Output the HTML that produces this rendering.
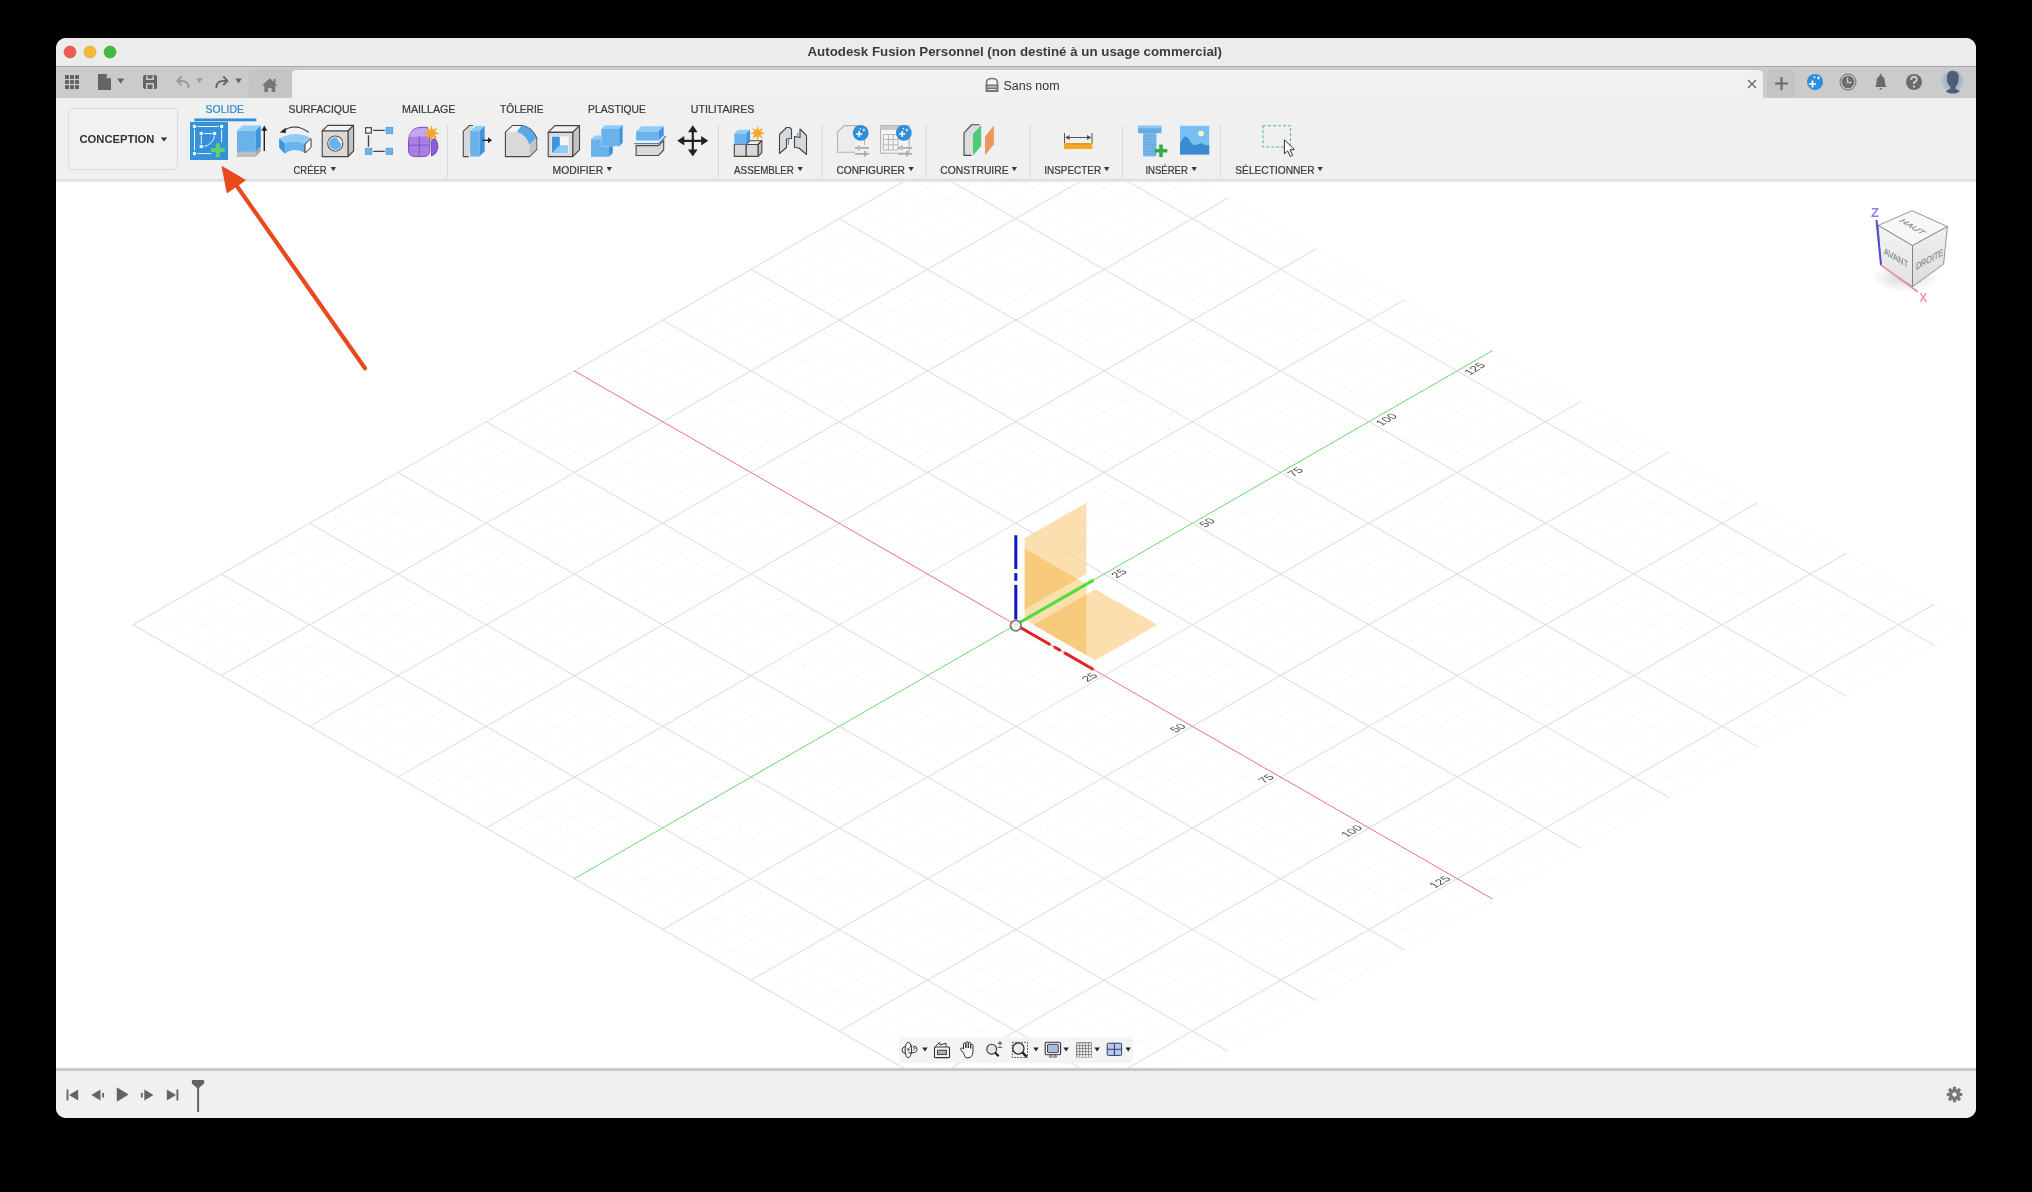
<!DOCTYPE html>
<html><head><meta charset="utf-8"><title>Autodesk Fusion</title>
<style>html,body{margin:0;padding:0;background:#000;width:2032px;height:1192px;overflow:hidden}
svg text{font-family:"Liberation Sans",sans-serif}</style></head>
<body><svg width="2032" height="1192" viewBox="0 0 2032 1192" style="display:block;will-change:transform;font-family:'Liberation Sans',sans-serif"><rect x="0" y="0" width="2032" height="1192" fill="#000"/>
<defs><clipPath id="win"><rect x="56" y="38" width="1920" height="1080" rx="10" ry="10"/></clipPath></defs>
<g clip-path="url(#win)">
<rect x="56" y="38" width="1920" height="1080" fill="#f0f0f0"/>
<rect x="56" y="38" width="1920" height="28" fill="#ececec"/>
<rect x="56" y="66" width="1920" height="1" fill="#a9a9a9"/>
<rect x="56" y="67" width="1920" height="31" fill="#cbcbcb"/>
<rect x="248.5" y="70" width="43" height="28" rx="4" fill="#c4c4c4"/>
<rect x="1767" y="70" width="28" height="28" rx="4" fill="#c4c4c4"/>
<path d="M292 98 V75 Q292 70 297 70 H1758 Q1763 70 1763 75 V98 Z" fill="#f1f1f1"/>
<rect x="56" y="98" width="1920" height="82" fill="#f0f0f0"/>
<rect x="56" y="179" width="1920" height="1" fill="#dadada"/>
<rect x="56" y="180" width="1920" height="2" fill="#e6e6e6"/>
<rect x="56" y="182" width="1920" height="886" fill="#ffffff"/>
<rect x="56" y="1068" width="1920" height="3" fill="#c9c9c9"/>
<rect x="56" y="1071" width="1920" height="47" fill="#f0f0f0"/>
</g>
<defs><clipPath id="vp"><rect x="56" y="182" width="1920" height="886"/></clipPath></defs>
<g clip-path="url(#vp)">
<path d="M150.70 634.95L1068.76 106.89M150.70 614.64L1068.76 1142.70M168.36 645.11L1086.42 117.05M168.36 604.49L1086.42 1132.55M186.01 655.26L1104.08 127.20M186.01 594.33L1104.08 1122.39M203.67 665.42L1121.73 137.36M203.67 584.18L1121.73 1112.24M238.98 685.73L1157.04 157.67M238.98 563.87L1157.04 1091.93M256.63 695.88L1174.69 167.82M256.63 553.71L1174.69 1081.78M274.29 706.04L1192.35 177.98M274.29 543.56L1192.35 1071.62M291.94 716.19L1210.00 188.13M291.94 533.40L1210.00 1061.46M327.25 736.50L1245.32 208.44M327.25 513.09L1245.32 1041.15M344.91 746.66L1262.97 218.60M344.91 502.94L1262.97 1031.00M362.56 756.81L1280.62 228.75M362.56 492.78L1280.62 1020.85M380.22 766.97L1298.28 238.91M380.22 482.63L1298.28 1010.69M415.53 787.28L1333.59 259.22M415.53 462.32L1333.59 990.38M433.18 797.43L1351.24 269.37M433.18 452.16L1351.24 980.22M450.84 807.59L1368.90 279.53M450.84 442.01L1368.90 970.07M468.49 817.75L1386.55 289.68M468.49 431.85L1386.55 959.91M503.80 838.05L1421.87 309.99M503.80 411.54L1421.87 939.61M521.46 848.21L1439.52 320.15M521.46 401.39L1439.52 929.45M539.12 858.37L1457.17 330.30M539.12 391.23L1457.17 919.29M556.77 868.52L1474.83 340.46M556.77 381.08L1474.83 909.14M592.08 888.83L1510.14 360.77M592.08 360.77L1510.14 888.83M609.73 898.98L1527.80 370.92M609.73 350.61L1527.80 878.67M627.39 909.14L1545.45 381.08M627.39 340.46L1545.45 868.52M645.04 919.29L1563.11 391.23M645.04 330.30L1563.11 858.37M680.36 939.61L1598.41 411.54M680.36 309.99L1598.41 838.05M698.01 949.76L1616.07 421.70M698.01 299.84L1616.07 827.90M715.66 959.91L1633.72 431.85M715.66 289.68L1633.72 817.75M733.32 970.07L1651.38 442.01M733.32 279.53L1651.38 807.59M768.63 990.38L1686.69 462.32M768.63 259.22L1686.69 787.28M786.28 1000.53L1704.35 472.47M786.28 249.06L1704.35 777.12M803.94 1010.69L1722.00 482.63M803.94 238.91L1722.00 766.97M821.59 1020.85L1739.65 492.78M821.59 228.75L1739.65 756.81M856.90 1041.15L1774.97 513.09M856.90 208.44L1774.97 736.50M874.56 1051.31L1792.62 523.25M874.56 198.29L1792.62 726.35M892.21 1061.46L1810.28 533.40M892.21 188.13L1810.28 716.19M909.87 1071.62L1827.93 543.56M909.87 177.98L1827.93 706.04M945.18 1091.93L1863.24 563.87M945.18 157.67L1863.24 685.73M962.83 1102.09L1880.89 574.02M962.83 147.51L1880.89 675.57M980.49 1112.24L1898.55 584.18M980.49 137.36L1898.55 665.42M998.14 1122.39L1916.20 594.33M998.14 127.20L1916.20 655.26M1033.45 1142.70L1951.51 614.64M1033.45 106.89L1951.51 634.95M1051.11 1152.86L1969.17 624.80M1051.11 96.74L1969.17 624.80" stroke="#f2f2f2" stroke-width="1" stroke-dasharray="1.6,2.4" fill="none"/>
<path d="M133.05 624.80L1051.11 96.74M133.05 624.80L1051.11 1152.86M221.32 675.57L1139.38 147.51M221.32 574.02L1139.38 1102.09M309.60 726.35L1227.66 198.29M309.60 523.25L1227.66 1051.31M397.87 777.12L1315.93 249.06M397.87 472.47L1315.93 1000.53M486.15 827.90L1404.21 299.84M486.15 421.70L1404.21 949.76M662.70 929.45L1580.76 401.39M662.70 320.15L1580.76 848.21M750.97 980.22L1669.03 452.16M750.97 269.37L1669.03 797.43M839.25 1031.00L1757.31 502.94M839.25 218.60L1757.31 746.66M927.52 1081.78L1845.59 553.71M927.52 167.82L1845.59 695.88M1015.80 1132.55L1933.86 604.49M1015.80 117.05L1933.86 645.11" stroke="#dfdfdf" stroke-width="1.05" fill="none"/>
<line x1="574.42" y1="370.92" x2="1492.48" y2="898.98" stroke="#ea7480" stroke-width="1"/>
<line x1="574.42" y1="878.67" x2="1492.48" y2="350.61" stroke="#6fd86f" stroke-width="1"/>
<text transform="matrix(0.866,-0.5,0.866,0.5,1098.43,675.98)" font-size="11.4" fill="#4a4a4a" text-anchor="end">25</text>
<text transform="matrix(0.866,-0.5,0.866,0.5,1116.79,578.49)" font-size="11.4" fill="#4a4a4a" text-anchor="start">25</text>
<text transform="matrix(0.866,-0.5,0.866,0.5,1186.70,726.76)" font-size="11.4" fill="#4a4a4a" text-anchor="end">50</text>
<text transform="matrix(0.866,-0.5,0.866,0.5,1205.06,527.72)" font-size="11.4" fill="#4a4a4a" text-anchor="start">50</text>
<text transform="matrix(0.866,-0.5,0.866,0.5,1274.98,777.53)" font-size="11.4" fill="#4a4a4a" text-anchor="end">75</text>
<text transform="matrix(0.866,-0.5,0.866,0.5,1293.34,476.94)" font-size="11.4" fill="#4a4a4a" text-anchor="start">75</text>
<text transform="matrix(0.866,-0.5,0.866,0.5,1363.25,828.31)" font-size="11.4" fill="#4a4a4a" text-anchor="end">100</text>
<text transform="matrix(0.866,-0.5,0.866,0.5,1381.61,426.17)" font-size="11.4" fill="#4a4a4a" text-anchor="start">100</text>
<text transform="matrix(0.866,-0.5,0.866,0.5,1451.53,879.08)" font-size="11.4" fill="#4a4a4a" text-anchor="end">125</text>
<text transform="matrix(0.866,-0.5,0.866,0.5,1469.89,375.39)" font-size="11.4" fill="#4a4a4a" text-anchor="start">125</text>
<polygon points="1033.45,624.80 1095.25,660.34 1157.04,624.80 1095.25,589.26" fill="#fff" fill-opacity="0.55"/>
<polygon points="1024.63,619.70 1086.42,655.25 1086.42,584.02 1024.63,548.48" fill="#fff" fill-opacity="0.55"/>
<polygon points="1024.63,609.55 1086.42,574.00 1086.42,502.78 1024.63,538.32" fill="#fff" fill-opacity="0.55"/>
<polygon points="1033.45,624.80 1095.25,660.34 1157.04,624.80 1095.25,589.26" fill="rgba(245,168,38,0.37)"/>
<polygon points="1024.63,619.70 1086.42,655.25 1086.42,584.02 1024.63,548.48" fill="rgba(245,168,38,0.37)"/>
<polygon points="1024.63,609.55 1086.42,574.00 1086.42,502.78 1024.63,538.32" fill="rgba(245,168,38,0.37)"/>
<line x1="1020.39" y1="627.44" x2="1050.40" y2="644.70" stroke="#e3231f" stroke-width="3"/>
<line x1="1053.93" y1="646.73" x2="1060.64" y2="650.59" stroke="#e3231f" stroke-width="3"/>
<line x1="1064.17" y1="652.62" x2="1093.48" y2="669.48" stroke="#e3231f" stroke-width="3"/>
<line x1="1015.80" y1="619.51" x2="1015.80" y2="584.91" stroke="#0b17c9" stroke-width="3"/>
<line x1="1015.80" y1="580.84" x2="1015.80" y2="573.11" stroke="#0b17c9" stroke-width="3"/>
<line x1="1015.80" y1="569.04" x2="1015.80" y2="535.26" stroke="#0b17c9" stroke-width="3"/>
<line x1="1020.39" y1="622.16" x2="1093.48" y2="580.12" stroke="#4fdf3a" stroke-width="3"/>
<circle cx="1015.8" cy="625.5999999999999" r="5.3" fill="rgba(255,255,255,0.6)" stroke="#7b7b7b" stroke-width="1.8"/>
</g>
<defs><radialGradient id="cshadow" cx="0.5" cy="0.5" r="0.5"><stop offset="0" stop-color="#000" stop-opacity="0.16"/><stop offset="1" stop-color="#000" stop-opacity="0"/></radialGradient><linearGradient id="cfL" x1="0" y1="0" x2="0" y2="1"><stop offset="0" stop-color="#f4f4f4"/><stop offset="1" stop-color="#e2e2e2"/></linearGradient><linearGradient id="cfR" x1="0" y1="0" x2="0" y2="1"><stop offset="0" stop-color="#f0f0f0"/><stop offset="1" stop-color="#dcdcdc"/></linearGradient></defs>
<ellipse cx="1905" cy="278" rx="34" ry="14" fill="url(#cshadow)"/>
<polygon points="1878.2,225.4 1912.0,210.7 1947.4,226.5 1912.5,245.6" fill="#f7f7f7" stroke="#6a6a6a" stroke-width="0.7" stroke-linejoin="round"/>
<polygon points="1878.2,225.4 1912.5,245.6 1912.5,286.5 1880.9,265.2" fill="url(#cfL)" stroke="#6a6a6a" stroke-width="0.7" stroke-linejoin="round"/>
<polygon points="1912.5,245.6 1947.4,226.5 1943.6,264.2 1912.5,286.5" fill="url(#cfR)" stroke="#6a6a6a" stroke-width="0.7" stroke-linejoin="round"/>
<text transform="matrix(0.86,0.5,-0.8,0.35,1910,227.8)" font-size="9.4" fill="#8a8a8a" stroke="#8a8a8a" stroke-width="0.25" text-anchor="middle" textLength="27" lengthAdjust="spacingAndGlyphs">HAUT</text>
<text transform="matrix(0.866,0.5,0,1,1896,261)" font-size="9.4" fill="#8a8a8a" stroke="#8a8a8a" stroke-width="0.25" text-anchor="middle" textLength="28" lengthAdjust="spacingAndGlyphs">AVANT</text>
<text transform="matrix(0.877,-0.48,0,1,1929.5,262.5)" font-size="9.4" fill="#8a8a8a" stroke="#8a8a8a" stroke-width="0.25" text-anchor="middle" textLength="31" lengthAdjust="spacingAndGlyphs">DROITE</text>
<line x1="1876.5" y1="220" x2="1881" y2="265" stroke="#4b4bd6" stroke-width="2"/>
<line x1="1881" y1="265" x2="1918" y2="292" stroke="#e79aa8" stroke-width="2"/>
<text x="1871" y="216.5" font-size="13" fill="#8585e6" font-weight="700" textLength="8" lengthAdjust="spacingAndGlyphs">Z</text>
<text x="1919.3" y="301.5" font-size="13" fill="#ee9aaa" font-weight="700" textLength="8" lengthAdjust="spacingAndGlyphs">X</text>
<circle cx="70" cy="52" r="6" fill="#ee5a52" stroke="#d94a43" stroke-width="0.6"/>
<circle cx="90" cy="52" r="6" fill="#f4b938" stroke="#dca32c" stroke-width="0.6"/>
<circle cx="110" cy="52" r="6" fill="#3ebc3e" stroke="#32a332" stroke-width="0.6"/>
<text x="807.5" y="55.8" font-size="13" font-weight="700" fill="#3c3c3c" text-anchor="start" textLength="414.5" lengthAdjust="spacingAndGlyphs" >Autodesk Fusion Personnel (non destiné à un usage commercial)</text>
<rect x="65" y="75" width="4" height="4" rx="0.6" fill="#646464"/><rect x="65" y="80" width="4" height="4" rx="0.6" fill="#646464"/><rect x="65" y="85" width="4" height="4" rx="0.6" fill="#646464"/><rect x="70" y="75" width="4" height="4" rx="0.6" fill="#646464"/><rect x="70" y="80" width="4" height="4" rx="0.6" fill="#646464"/><rect x="70" y="85" width="4" height="4" rx="0.6" fill="#646464"/><rect x="75" y="75" width="4" height="4" rx="0.6" fill="#646464"/><rect x="75" y="80" width="4" height="4" rx="0.6" fill="#646464"/><rect x="75" y="85" width="4" height="4" rx="0.6" fill="#646464"/>
<path d="M98 74 H107 L111 78 V90 H98 Z" fill="#646464"/><path d="M107 74 V78 H111" fill="#cbcbcb" stroke="#cbcbcb" stroke-width="0.5"/>
<path d="M117.20 78.60 H124.20 L120.70 83.80 Z" fill="#646464"/>
<path d="M143 76.5 Q143 75 144.5 75 H155.5 Q157 75 157 76.5 V87.5 Q157 89 155.5 89 H144.5 L143 87.5 Z" fill="#646464"/><rect x="146" y="75.5" width="8" height="4.5" fill="#cbcbcb"/><rect x="147.5" y="75.5" width="5" height="3" fill="#646464"/><rect x="146" y="83" width="8" height="6" fill="#cbcbcb"/><rect x="147.5" y="84.5" width="5" height="4.5" fill="#646464"/>
<path d="M188.5 88 Q188.5 80.8 181 80.8 H177.5 M181.5 76.5 L177.3 80.8 L181.5 85" fill="none" stroke="#959595" stroke-width="1.8" stroke-linejoin="round"/>
<path d="M196.05 78.20 H202.55 L199.30 83.00 Z" fill="#9a9a9a"/>
<path d="M216.3 88 Q216.3 80.8 223.8 80.8 H227.3 M223.3 76.5 L227.5 80.8 L223.3 85" fill="none" stroke="#646464" stroke-width="1.8" stroke-linejoin="round"/>
<path d="M235.25 78.60 H241.75 L238.50 83.40 Z" fill="#646464"/>
<path d="M262 85.5 L269.8 78.2 L277.6 85.5 H275.3 V92 H271.6 V88 H268 V92 H264.3 V85.5 Z" fill="#777"/><rect x="273.5" y="79" width="2" height="4" fill="#777"/>
<path d="M986.5 85 V82.5 Q986.5 78.5 992 78.5 Q997.5 78.5 997.5 82.5 V85" fill="none" stroke="#777" stroke-width="1.6"/><rect x="985.5" y="84.5" width="13" height="7.5" rx="0.8" fill="#777"/><rect x="987.5" y="86.5" width="9" height="0.9" fill="#f1f1f1"/><rect x="987.5" y="89" width="9" height="0.9" fill="#f1f1f1"/>
<text x="1003.5" y="89.7" font-size="12.3" font-weight="400" fill="#333" text-anchor="start" textLength="56" lengthAdjust="spacingAndGlyphs" >Sans nom</text>
<path d="M1748 80 L1756 88 M1756 80 L1748 88" stroke="#666" stroke-width="1.3"/>
<path d="M1775 83.5 H1788 M1781.5 77 V90" stroke="#6b6b6b" stroke-width="2.2"/>
<circle cx="1815" cy="82" r="8" fill="#2d8fdc"/><path d="M1812.5 80.5 V87.5 M1809 84 H1816" stroke="#fff" stroke-width="1.7"/><path d="M1818.5 76.5 V79.5 M1817 78 H1820" stroke="#fff" stroke-width="1"/><circle cx="1814.5" cy="77.2" r="0.9" fill="#fff"/>
<circle cx="1848" cy="82" r="8" fill="none" stroke="#6b6b6b" stroke-width="1"/><circle cx="1848" cy="82" r="6.3" fill="#6b6b6b"/><path d="M1847.5 77.5 V82.5 H1851.5" fill="none" stroke="#cbcbcb" stroke-width="1.3"/>
<path d="M1875 87 Q1876.5 85.5 1876.5 82 Q1876.5 76.5 1880.7 75.6 Q1884.9 76.5 1884.9 82 Q1884.9 85.5 1886.4 87 Z" fill="#6b6b6b"/><circle cx="1880.7" cy="74.8" r="1.1" fill="#6b6b6b"/><path d="M1879 88 H1882.4 L1880.7 90 Z" fill="#6b6b6b"/>
<circle cx="1914" cy="82" r="8" fill="#6b6b6b"/><path d="M1911.2 80 Q1911.2 76.7 1914 76.7 Q1916.9 76.7 1916.9 79.6 Q1916.9 81.3 1914 82.5 V84" fill="none" stroke="#cbcbcb" stroke-width="1.9"/><circle cx="1914" cy="86.6" r="1.2" fill="#cbcbcb"/>
<defs><clipPath id="av"><circle cx="1952.7" cy="81.8" r="11.8"/></clipPath><radialGradient id="avg" cx="0.5" cy="0.45" r="0.55"><stop offset="0.6" stop-color="#a6b5c9"/><stop offset="1" stop-color="#c4ceda"/></radialGradient></defs><circle cx="1952.7" cy="81.8" r="11.8" fill="url(#avg)"/><g clip-path="url(#av)"><path d="M1944 95 Q1944.5 90.5 1950.3 89 V86.5 Q1946.8 84 1946.8 78 Q1946.8 71 1952.5 70.8 Q1958.8 71 1958.8 77.5 Q1958.8 84 1955.6 86.5 V89 Q1961 90.5 1962 95 Z" fill="#4f5e75"/></g>
<rect x="68.5" y="108.5" width="109" height="61" rx="4" fill="#f1f1f1" stroke="#dcdcdc" stroke-width="1"/>
<text x="79.5" y="143.3" font-size="11.4" font-weight="700" fill="#333" text-anchor="start" textLength="75" lengthAdjust="spacingAndGlyphs" >CONCEPTION</text>
<path d="M160.75 137.60 H167.25 L164.00 141.60 Z" fill="#333"/>
<text x="205.6" y="112.8" font-size="10.7" font-weight="400" fill="#2b8ad0" text-anchor="start" textLength="38.3" lengthAdjust="spacingAndGlyphs" stroke="#2b8ad0" stroke-width="0.22" >SOLIDE</text>
<text x="288.6" y="112.8" font-size="10.7" font-weight="400" fill="#3a3a3a" text-anchor="start" textLength="67.8" lengthAdjust="spacingAndGlyphs" stroke="#3a3a3a" stroke-width="0.22" >SURFACIQUE</text>
<text x="402.0" y="112.8" font-size="10.7" font-weight="400" fill="#3a3a3a" text-anchor="start" textLength="53.5" lengthAdjust="spacingAndGlyphs" stroke="#3a3a3a" stroke-width="0.22" >MAILLAGE</text>
<text x="500.0" y="112.8" font-size="10.7" font-weight="400" fill="#3a3a3a" text-anchor="start" textLength="43.599999999999994" lengthAdjust="spacingAndGlyphs" stroke="#3a3a3a" stroke-width="0.22" >TÔLERIE</text>
<text x="588.1" y="112.8" font-size="10.7" font-weight="400" fill="#3a3a3a" text-anchor="start" textLength="57.699999999999996" lengthAdjust="spacingAndGlyphs" stroke="#3a3a3a" stroke-width="0.22" >PLASTIQUE</text>
<text x="690.8000000000001" y="112.8" font-size="10.7" font-weight="400" fill="#3a3a3a" text-anchor="start" textLength="63.599999999999994" lengthAdjust="spacingAndGlyphs" stroke="#3a3a3a" stroke-width="0.22" >UTILITAIRES</text>
<rect x="194.3" y="118.5" width="62" height="2.8" fill="#2f8fd6"/>
<text x="293.5" y="173.5" font-size="10.7" font-weight="400" fill="#3a3a3a" text-anchor="start" textLength="33.199999999999996" lengthAdjust="spacingAndGlyphs" stroke="#3a3a3a" stroke-width="0.22" >CRÉER</text>
<path d="M330.60 167.10 H336.00 L333.30 171.30 Z" fill="#3a3a3a"/>
<text x="552.6" y="173.5" font-size="10.7" font-weight="400" fill="#3a3a3a" text-anchor="start" textLength="50.5" lengthAdjust="spacingAndGlyphs" stroke="#3a3a3a" stroke-width="0.22" >MODIFIER</text>
<path d="M606.60 167.10 H612.00 L609.30 171.30 Z" fill="#3a3a3a"/>
<text x="734.1" y="173.5" font-size="10.7" font-weight="400" fill="#3a3a3a" text-anchor="start" textLength="59.8" lengthAdjust="spacingAndGlyphs" stroke="#3a3a3a" stroke-width="0.22" >ASSEMBLER</text>
<path d="M797.50 167.10 H802.90 L800.20 171.30 Z" fill="#3a3a3a"/>
<text x="836.4" y="173.5" font-size="10.7" font-weight="400" fill="#3a3a3a" text-anchor="start" textLength="68.39999999999999" lengthAdjust="spacingAndGlyphs" stroke="#3a3a3a" stroke-width="0.22" >CONFIGURER</text>
<path d="M908.40 167.10 H913.80 L911.10 171.30 Z" fill="#3a3a3a"/>
<text x="940.3000000000001" y="173.5" font-size="10.7" font-weight="400" fill="#3a3a3a" text-anchor="start" textLength="68.3" lengthAdjust="spacingAndGlyphs" stroke="#3a3a3a" stroke-width="0.22" >CONSTRUIRE</text>
<path d="M1011.60 167.10 H1017.00 L1014.30 171.30 Z" fill="#3a3a3a"/>
<text x="1044.1999999999998" y="173.5" font-size="10.7" font-weight="400" fill="#3a3a3a" text-anchor="start" textLength="56.9" lengthAdjust="spacingAndGlyphs" stroke="#3a3a3a" stroke-width="0.22" >INSPECTER</text>
<path d="M1104.00 167.10 H1109.40 L1106.70 171.30 Z" fill="#3a3a3a"/>
<text x="1145.3999999999999" y="173.5" font-size="10.7" font-weight="400" fill="#3a3a3a" text-anchor="start" textLength="42.5" lengthAdjust="spacingAndGlyphs" stroke="#3a3a3a" stroke-width="0.22" >INSÉRER</text>
<path d="M1191.50 167.10 H1196.90 L1194.20 171.30 Z" fill="#3a3a3a"/>
<text x="1235.3" y="173.5" font-size="10.7" font-weight="400" fill="#3a3a3a" text-anchor="start" textLength="79.2" lengthAdjust="spacingAndGlyphs" stroke="#3a3a3a" stroke-width="0.22" >SÉLECTIONNER</text>
<path d="M1317.40 167.10 H1322.80 L1320.10 171.30 Z" fill="#3a3a3a"/>
<rect x="447.0" y="125" width="1" height="53" fill="#dadada"/>
<rect x="718.0" y="125" width="1" height="53" fill="#dadada"/>
<rect x="821.5" y="125" width="1" height="53" fill="#dadada"/>
<rect x="925.5" y="125" width="1" height="53" fill="#dadada"/>
<rect x="1029.5" y="125" width="1" height="53" fill="#dadada"/>
<rect x="1122.0" y="125" width="1" height="53" fill="#dadada"/>
<rect x="1220.0" y="125" width="1" height="53" fill="#dadada"/>
<rect x="190" y="122" width="38" height="38" fill="#3591da"/>
<rect x="192.9" y="124.9" width="3.2" height="3.2" fill="#e9f7ff"/>
<rect x="220.0" y="124.9" width="3.2" height="3.2" fill="#e9f7ff"/>
<rect x="192.9" y="152.0" width="3.2" height="3.2" fill="#e9f7ff"/>
<rect x="199.70000000000002" y="131.9" width="3.2" height="3.2" fill="#e9f7ff"/>
<rect x="212.9" y="131.9" width="3.2" height="3.2" fill="#e9f7ff"/>
<rect x="199.70000000000002" y="144.9" width="3.2" height="3.2" fill="#e9f7ff"/>
<path d="M197.5 126.5 H218.5 M194.5 129.5 V150.5 M221.6 129.5 V142 M197.5 153.6 H211 M204 133.5 H212 M201.3 136 V144 M214.5 136 A13 13 0 0 1 204 146.5" fill="none" stroke="#e9f7ff" stroke-width="1"/>
<path d="M217.9 143.2 V156.9 M211 150 H224.9" stroke="#5fd06a" stroke-width="4"/>
<polygon points="237.00,152.00 255.40,152.00 255.40,157.00 237.00,157.00" fill="#bdbdbd" stroke="none" stroke-width="1" stroke-linejoin="round" />
<polygon points="255.40,152.00 260.60,146.40 260.60,151.40 255.40,157.00" fill="#a9a9a9" stroke="none" stroke-width="1" stroke-linejoin="round" />
<polygon points="237.00,130.80 242.40,125.40 260.80,125.40 255.40,130.80" fill="#8fcdf7" stroke="none" stroke-width="1" stroke-linejoin="round" />
<polygon points="255.40,130.80 260.80,125.40 260.80,146.50 255.40,151.90" fill="#3f93dc" stroke="none" stroke-width="1" stroke-linejoin="round" />
<polygon points="237.00,130.80 255.40,130.80 255.40,151.90 237.00,151.90" fill="#6ab2ea" stroke="none" stroke-width="1" stroke-linejoin="round" />
<path d="M264.3 151 V129" stroke="#222" stroke-width="1.4"/><path d="M261.3 130.8 L264.3 125.6 L267.3 130.8 Z" fill="#222"/>
<path d="M308.7 132.4 Q295 122 282.5 131.5" fill="none" stroke="#222" stroke-width="1.1"/><path d="M279.8 132.6 L285.5 127.8 L285.8 133 Z" fill="#222"/>
<path d="M279.2 138.6 Q295 130 310.4 137.8 L305 144 Q295 139.5 284.7 143.5 Z" fill="#8fcdf7"/>
<path d="M279.2 138.6 L284.7 143.5 Q295 139.5 305 144 V153 Q295 147 284.7 153.5 L279.2 147.5 Z" fill="#6ab2ea"/>
<path d="M279.2 138.6 L284.7 143.5 V153.5 L279.2 147.5 Z" fill="#3f93dc"/>
<polygon points="305.00,144.00 311.00,138.50 311.00,147.50 305.00,153.00" fill="#fff" stroke="#333" stroke-width="1" stroke-linejoin="round" />
<polygon points="322.20,131.00 327.80,125.40 353.60,125.40 348.00,131.00" fill="#f3f3f3" stroke="#444" stroke-width="1.1" stroke-linejoin="round" />
<polygon points="348.00,131.00 353.60,125.40 353.60,151.00 348.00,156.60" fill="#c3c3c3" stroke="#444" stroke-width="1.1" stroke-linejoin="round" />
<polygon points="322.20,131.00 348.00,131.00 348.00,156.60 322.20,156.60" fill="#d9d9d9" stroke="#444" stroke-width="1.1" stroke-linejoin="round" />
<circle cx="335.3" cy="143.6" r="7.6" fill="#fff" stroke="#555" stroke-width="1.1"/><circle cx="335.3" cy="143.6" r="6.3" fill="#6ab2ea"/>
<path d="M336.5 137.3 Q339 142.5 342 144.5 Q341.8 139 336.5 137.3 Z" fill="#f3f3f3"/>
<rect x="365.7" y="127.7" width="5.6" height="5.4" fill="#fff" stroke="#444" stroke-width="1.2"/>
<rect x="386" y="127.2" width="6.8" height="6.6" fill="#6ab2ea" stroke="#3d8bd0" stroke-width="0.5"/>
<rect x="365.2" y="148.1" width="6.8" height="6.6" fill="#6ab2ea" stroke="#3d8bd0" stroke-width="0.5"/>
<rect x="386" y="148.1" width="6.8" height="6.6" fill="#6ab2ea" stroke="#3d8bd0" stroke-width="0.5"/>
<path d="M373.2 130.4 H384.8 M368.5 135.2 V146.8 M373.2 151.4 H384.8" stroke="#444" stroke-width="1.4"/>
<path d="M408.5 142 Q408.5 127.3 421.5 127.3 H427.5 L429.8 136 V151 Q429.5 156.6 423 156.6 H415 Q408.5 156.6 408.5 150 Z" fill="#a87fe3" stroke="#7a52c0" stroke-width="1"/>
<path d="M409.2 137 Q410 128 421.5 127.9 H427.3 L429.3 136.3 Z" fill="#c4a6f2"/>
<path d="M431.3 140.5 L434.5 138.3 Q438.2 141.5 437.9 147.5 Q437.4 153.5 431.5 156 Z" fill="#8a5fd4" stroke="#6c46b4" stroke-width="0.9"/>
<path d="M419.3 136.5 V156.2 M409 145.2 H429.5" stroke="#7b4fc8" stroke-width="0.9"/>
<polygon points="431.50,125.10 432.88,129.97 437.30,127.50 434.83,131.92 439.70,133.30 434.83,134.68 437.30,139.10 432.88,136.63 431.50,141.50 430.12,136.63 425.70,139.10 428.17,134.68 423.30,133.30 428.17,131.92 425.70,127.50 430.12,129.97" fill="#f5a623" stroke="none" stroke-width="1" stroke-linejoin="round" />
<path d="M468.8 156.6 H463.3 V131.2 L469.5 125.5 H473" fill="#d9d9d9" stroke="#4a4a4a" stroke-width="1.1"/>
<polygon points="470.10,131.20 475.40,125.90 484.70,125.90 479.40,131.20" fill="#8fcdf7" stroke="none" stroke-width="1" stroke-linejoin="round" />
<polygon points="479.40,131.20 484.70,125.90 484.70,151.30 479.40,156.60" fill="#3f93dc" stroke="none" stroke-width="1" stroke-linejoin="round" />
<polygon points="470.10,131.20 479.40,131.20 479.40,156.60 470.10,156.60" fill="#6ab2ea" stroke="none" stroke-width="1" stroke-linejoin="round" />
<path d="M482.5 140.3 H489" stroke="#222" stroke-width="1.4"/><path d="M488 137.3 L492 140.3 L488 143.3 Z" fill="#222"/>
<path d="M505.4 156.6 V132.1 L512.6 125.5 H522 Q532 127 536.7 138 V149.5 L529.6 156.6 Z" fill="#d9d9d9" stroke="#444" stroke-width="1.1" stroke-linejoin="round"/>
<path d="M505.9 132.4 L512.8 126 H521 L517 132 Q513 132.4 505.9 132.4 Z" fill="#f3f3f3"/>
<path d="M517 131.8 L521.5 125.8 Q532 127 536.4 138 L529.4 144.5 Q526 134.5 517 131.8 Z" fill="#5aa8e6"/>
<path d="M529.6 145 L536.4 138.5 V149.5 L529.6 156.3 Z" fill="#c3c3c3"/>
<polygon points="548.20,132.40 555.00,125.60 579.50,125.60 572.70,132.40" fill="#f3f3f3" stroke="#444" stroke-width="1.1" stroke-linejoin="round" />
<polygon points="572.70,132.40 579.50,125.60 579.50,149.80 572.70,156.60" fill="#c3c3c3" stroke="#444" stroke-width="1.1" stroke-linejoin="round" />
<polygon points="548.20,132.40 572.70,132.40 572.70,156.60 548.20,156.60" fill="#d9d9d9" stroke="#444" stroke-width="1.1" stroke-linejoin="round" />
<rect x="551.5" y="136.3" width="17" height="17" fill="#f5f5f5"/>
<path d="M552 136.7 H559.7 V145.2 H568 V152.9 H552 Z" fill="#8fcdf7"/><path d="M552 136.7 H559.7 V145.2 L552 152.9 Z" fill="#3f93dc"/>
<polygon points="601.30,129.00 604.80,125.30 622.70,125.30 619.20,129.00" fill="#8fcdf7" stroke="none" stroke-width="1" stroke-linejoin="round" />
<polygon points="619.20,129.00 622.70,125.30 622.70,142.70 619.20,146.20" fill="#3f93dc" stroke="none" stroke-width="1" stroke-linejoin="round" />
<polygon points="601.30,129.00 619.20,129.00 619.20,146.20 601.30,146.20" fill="#6ab2ea" stroke="none" stroke-width="1" stroke-linejoin="round" />
<polygon points="591.00,139.20 594.70,135.50 601.30,135.50 601.30,139.20" fill="#8fcdf7" stroke="none" stroke-width="1" stroke-linejoin="round" />
<polygon points="609.00,146.20 612.80,146.20 612.80,153.10 609.00,156.80" fill="#3f93dc" stroke="none" stroke-width="1" stroke-linejoin="round" />
<polygon points="591.00,139.20 601.30,139.20 601.30,146.20 609.00,146.20 609.00,156.80 591.00,156.80" fill="#6ab2ea" stroke="none" stroke-width="1" stroke-linejoin="round" />
<path d="M601.3 139.2 V146.2 H609" fill="none" stroke="#9fd4fa" stroke-width="0.6"/>
<polygon points="636.10,131.50 641.30,126.30 663.70,126.30 658.50,131.50" fill="#8fcdf7" stroke="none" stroke-width="1" stroke-linejoin="round" />
<polygon points="658.50,131.50 663.70,126.30 663.70,135.30 658.50,140.50" fill="#3f93dc" stroke="none" stroke-width="1" stroke-linejoin="round" />
<polygon points="636.10,131.50 658.50,131.50 658.50,140.50 636.10,140.50" fill="#6ab2ea" stroke="none" stroke-width="1" stroke-linejoin="round" />
<path d="M634.2 143.6 H658.5 L665.9 136" fill="none" stroke="#3f84cf" stroke-width="1.2"/>
<path d="M636.1 145.6 H658.5 L663.7 140.3 V150 L658.5 155.5 H636.1 Z" fill="#d9d9d9" stroke="#4a4a4a" stroke-width="1.1"/>
<path d="M692.8 130 V151.5 M682 140.8 H703.5" stroke="#222" stroke-width="2.2"/>
<path d="M692.8 125.3 L697.6 132.3 H688 Z M692.8 156.5 L697.6 149.5 H688 Z M677.3 140.8 L684.3 136 V145.6 Z M708.2 140.8 L701.2 136 V145.6 Z" fill="#222"/>
<polygon points="734.30,144.50 734.30,144.50 746.20,144.50 746.20,144.50" fill="#d9d9d9" stroke="#444" stroke-width="1.1" stroke-linejoin="round" />
<polygon points="746.20,144.50 746.20,144.50 746.20,156.40 746.20,156.40" fill="#d9d9d9" stroke="#444" stroke-width="1.1" stroke-linejoin="round" />
<polygon points="734.30,144.50 746.20,144.50 746.20,156.40 734.30,156.40" fill="#d9d9d9" stroke="#444" stroke-width="1.1" stroke-linejoin="round" />
<polygon points="746.20,144.50 750.00,140.70 761.80,140.70 758.00,144.50" fill="#f3f3f3" stroke="#444" stroke-width="1.1" stroke-linejoin="round" />
<polygon points="758.00,144.50 761.80,140.70 761.80,152.60 758.00,156.40" fill="#c3c3c3" stroke="#444" stroke-width="1.1" stroke-linejoin="round" />
<polygon points="746.20,144.50 758.00,144.50 758.00,156.40 746.20,156.40" fill="#d9d9d9" stroke="#444" stroke-width="1.1" stroke-linejoin="round" />
<polygon points="734.30,133.50 738.10,129.70 750.00,129.70 746.20,133.50" fill="#8fcdf7" stroke="none" stroke-width="1" stroke-linejoin="round" />
<polygon points="746.20,133.50 750.00,129.70 750.00,140.70 746.20,144.50" fill="#3f93dc" stroke="none" stroke-width="1" stroke-linejoin="round" />
<polygon points="734.30,133.50 746.20,133.50 746.20,144.50 734.30,144.50" fill="#6ab2ea" stroke="none" stroke-width="1" stroke-linejoin="round" />
<polygon points="757.60,125.60 758.86,130.15 762.97,127.83 760.65,131.94 765.20,133.20 760.65,134.46 762.97,138.57 758.86,136.25 757.60,140.80 756.34,136.25 752.23,138.57 754.55,134.46 750.00,133.20 754.55,131.94 752.23,127.83 756.34,130.15" fill="#f5a623" stroke="none" stroke-width="1" stroke-linejoin="round" />
<path d="M779.5 153.5 V134.5 L786.5 127.5 H789 Q791.5 127.8 791.5 130.5 V138.5 L786.5 139 V147.5 Z" fill="#d9d9d9" stroke="#444" stroke-width="1.1" stroke-linejoin="round"/>
<path d="M794.5 136.5 V147.5 L799 148 L806.5 154.5 V135.5 L800 129 V137.5 Z" fill="#d9d9d9" stroke="#444" stroke-width="1.1" stroke-linejoin="round"/>
<path d="M788.5 139.5 V144.8 M797.8 132.5 V138" stroke="#3f84cf" stroke-width="1"/>
<path d="M855 152.3 H837.5 V132 L844.2 125.6 H858" fill="#ececec" stroke="#b3b3b3" stroke-width="1.1"/>
<path d="M864.5 139 V145" stroke="#b3b3b3" stroke-width="1"/>
<path d="M855 147.9 H869 M855 153.9 H869" stroke="#aaaaaa" stroke-width="1.8"/><path d="M858.8 145.2 V150.5" stroke="#a9bfd6" stroke-width="2"/><path d="M865 151 V156.5" stroke="#aaa" stroke-width="2"/>
<circle cx="860.7" cy="132.9" r="7.9" fill="#2e8fd8"/><path d="M859.2 131 V137 M856.2 134 H862.2" stroke="#fff" stroke-width="1.6"/><path d="M863.8 128.6 V131.4 M862.4 130 H865.2" stroke="#e5f3ff" stroke-width="1"/><circle cx="860.3" cy="128.8" r="0.8" fill="#fff"/>
<rect x="880.6" y="125.6" width="28.5" height="27.6" fill="#f5f5f5" stroke="#b3b3b3" stroke-width="1.1"/><rect x="881" y="126" width="27.8" height="4" fill="#c9c9c9"/>
<path d="M883.4 134.5 H898 V150 H883.4 Z M888.4 134.5 V150 M893.2 134.5 V150 M883.4 139.5 H898 M883.4 144.8 H898" fill="none" stroke="#b0b0b0" stroke-width="0.9"/>
<path d="M898 147.9 H912 M898 153.9 H912" stroke="#aaaaaa" stroke-width="1.8"/><path d="M901.8 145.2 V150.5" stroke="#a9bfd6" stroke-width="2"/><path d="M907 151 V156.5" stroke="#aaa" stroke-width="2"/>
<circle cx="903.8" cy="132.9" r="7.9" fill="#2e8fd8"/><path d="M902.3 131 V137 M899.3 134 H905.3" stroke="#fff" stroke-width="1.6"/><path d="M906.9 128.6 V131.4 M905.5 130 H908.3" stroke="#e5f3ff" stroke-width="1"/><circle cx="903.4" cy="128.8" r="0.8" fill="#fff"/>
<path d="M971.6 155.4 H964 V133 L971.6 124.8 H979.5" fill="#dcdcdc" stroke="#444" stroke-width="1.1"/>
<polygon points="973.00,134.00 981.20,125.00 981.20,146.00 973.00,155.40" fill="#4fc97a" stroke="none" stroke-width="1" stroke-linejoin="round" />
<polygon points="985.00,136.50 993.80,125.50 993.80,144.50 985.00,155.20" fill="#ee965a" stroke="none" stroke-width="1" stroke-linejoin="round" />
<path d="M1064.5 133 V144 M1092 133 V144 M1066 137.5 H1090.5" stroke="#555" stroke-width="1"/><path d="M1065 137.5 L1069.5 135 V140 Z M1091.5 137.5 L1087 135 V140 Z" fill="#555"/>
<rect x="1064" y="143" width="28.3" height="6" fill="#f3a81f"/>
<path d="M1067 143 V145 M1070 143 V144.5 M1073 143 V145 M1076 143 V144.5 M1079 143 V145 M1082 143 V144.5 M1085 143 V145 M1088 143 V144.5" stroke="#9a6a10" stroke-width="0.7"/>
<rect x="1138" y="125.8" width="23.5" height="7.5" rx="1.2" fill="#68ace6"/><rect x="1138" y="125.8" width="23.5" height="2.5" rx="1" fill="#8cc8f4"/>
<rect x="1143" y="133" width="13.5" height="23.5" rx="1.5" fill="#79b7ea"/>
<path d="M1143.5 136 H1156 M1143.5 139 H1156 M1143.5 142 H1156 M1143.5 145 H1156 M1143.5 148 H1156 M1143.5 151 H1156 M1143.5 154 H1156" stroke="#5b9fdc" stroke-width="0.8"/>
<path d="M1161 144.5 V157 M1154.7 150.7 H1167.3" stroke="#33a94a" stroke-width="3.6"/>
<rect x="1180" y="125.8" width="29.2" height="28.7" fill="#78c0f2"/>
<path d="M1180 154.5 V144 Q1184 133 1188 138 Q1192 146 1196 145 Q1200 142 1203.5 144 Q1207 146 1209.2 145 V154.5 Z" fill="#3a8bd0"/>
<circle cx="1201" cy="133.5" r="2.8" fill="#fff6c8"/>
<rect x="1263" y="125.7" width="27.5" height="21.3" fill="none" stroke="#5cbf70" stroke-width="1.1" stroke-dasharray="3,2"/>
<path d="M1284.4 139.8 V154 L1287.6 150.8 L1290.3 156.5 L1292.6 155.4 L1290 149.9 L1294.4 149.6 Z" fill="#fff" stroke="#333" stroke-width="1" stroke-linejoin="round"/>
<rect x="899" y="1037.5" width="234" height="25.5" rx="3" fill="#f3f3f3" fill-opacity="0.92"/>
<ellipse cx="908.3" cy="1050" rx="3.2" ry="7.8" fill="none" stroke="#333" stroke-width="1"/><path d="M905.5 1046.5 Q902 1047 902 1050 Q902 1053 905.5 1053.5" fill="none" stroke="#333" stroke-width="1"/><path d="M908.5 1052.8 H912 Q917 1052.8 917 1049.3 Q917 1046 913.5 1046" fill="none" stroke="#333" stroke-width="1"/><path d="M910 1044 L911.8 1045.8 L910 1047.6 M913 1046.8 L914.8 1048.6 L913 1050.4" fill="none" stroke="#333" stroke-width="1"/><path d="M908.3 1047.6 L910 1049.4 L908.3 1051.2 L906.6 1049.4 Z" fill="#3a7fd0"/>
<path d="M922.20 1047.40 H927.60 L924.90 1051.60 Z" fill="#222"/>
<rect x="934.5" y="1047" width="15" height="10.6" rx="0.8" fill="#f6f6f6" stroke="#333" stroke-width="1.1"/><rect x="937.6" y="1050.2" width="8.8" height="4.4" fill="#aab0b6" stroke="#333" stroke-width="0.9"/><path d="M935.2 1046.8 L939.5 1042.3 L940 1045 L946 1043.2 V1046.8" fill="none" stroke="#333" stroke-width="1"/>
<path d="M963.5 1053 L960.8 1049.8 Q960 1048.5 961.2 1048 Q962.2 1047.7 963.5 1049 V1044 Q963.7 1042.8 964.8 1043 Q965.8 1043.2 965.9 1044.3 V1048 V1042.7 Q966.1 1041.6 967.2 1041.7 Q968.3 1041.8 968.3 1042.9 V1048 V1043.2 Q968.6 1042 969.6 1042.2 Q970.6 1042.4 970.7 1043.5 V1048.5 V1045 Q971 1044 972 1044.2 Q973 1044.5 973 1045.5 V1052 Q972.5 1057.8 968 1057.8 H966 Q964.5 1056.5 963.5 1053 Z" fill="#fbfbfb" stroke="#333" stroke-width="1"/>
<circle cx="991.7" cy="1049.2" r="4.9" fill="#e6e6e6" stroke="#333" stroke-width="1.1"/><path d="M995.2 1052.7 L998.6 1056.2" stroke="#222" stroke-width="2.3"/><path d="M997.8 1043.2 H1002.2 M1000 1041 V1045.4 M997.8 1047.3 H1002.2" stroke="#333" stroke-width="0.9"/>
<rect x="1012.3" y="1042.3" width="15.2" height="15.2" fill="none" stroke="#333" stroke-width="0.9" stroke-dasharray="1.6,1.4"/><circle cx="1018.4" cy="1048.5" r="5.6" fill="#e6ecec" stroke="#222" stroke-width="1.2"/><path d="M1022.3 1052.4 L1026.8 1056.9" stroke="#222" stroke-width="2.4"/>
<path d="M1033.30 1047.40 H1038.70 L1036.00 1051.60 Z" fill="#222"/>
<rect x="1045.2" y="1042.2" width="15.4" height="12.6" rx="1.5" fill="#f4f4f4" stroke="#333" stroke-width="1.1"/><rect x="1047.5" y="1044.3" width="10.8" height="8.3" rx="0.6" fill="#a9bde0" stroke="#333" stroke-width="0.9"/><path d="M1049.3 1057 L1050.5 1055 H1055.3 L1056.5 1057 Z" fill="#fff" stroke="#333" stroke-width="0.8"/>
<path d="M1063.40 1047.40 H1068.80 L1066.10 1051.60 Z" fill="#222"/>
<rect x="1076.2" y="1042.2" width="15.6" height="15.4" rx="1.2" fill="#707070"/>
<rect x="1077.20" y="1043.20" width="2.2" height="2.2" fill="#f4f4f4"/><rect x="1077.20" y="1046.15" width="2.2" height="2.2" fill="#f4f4f4"/><rect x="1077.20" y="1049.10" width="2.2" height="2.2" fill="#f4f4f4"/><rect x="1077.20" y="1052.05" width="2.2" height="2.2" fill="#f4f4f4"/><rect x="1077.20" y="1055.00" width="2.2" height="2.2" fill="#f4f4f4"/><rect x="1080.15" y="1043.20" width="2.2" height="2.2" fill="#f4f4f4"/><rect x="1080.15" y="1046.15" width="2.2" height="2.2" fill="#f4f4f4"/><rect x="1080.15" y="1049.10" width="2.2" height="2.2" fill="#f4f4f4"/><rect x="1080.15" y="1052.05" width="2.2" height="2.2" fill="#f4f4f4"/><rect x="1080.15" y="1055.00" width="2.2" height="2.2" fill="#f4f4f4"/><rect x="1083.10" y="1043.20" width="2.2" height="2.2" fill="#f4f4f4"/><rect x="1083.10" y="1046.15" width="2.2" height="2.2" fill="#f4f4f4"/><rect x="1083.10" y="1049.10" width="2.2" height="2.2" fill="#f4f4f4"/><rect x="1083.10" y="1052.05" width="2.2" height="2.2" fill="#f4f4f4"/><rect x="1083.10" y="1055.00" width="2.2" height="2.2" fill="#f4f4f4"/><rect x="1086.05" y="1043.20" width="2.2" height="2.2" fill="#f4f4f4"/><rect x="1086.05" y="1046.15" width="2.2" height="2.2" fill="#f4f4f4"/><rect x="1086.05" y="1049.10" width="2.2" height="2.2" fill="#f4f4f4"/><rect x="1086.05" y="1052.05" width="2.2" height="2.2" fill="#f4f4f4"/><rect x="1086.05" y="1055.00" width="2.2" height="2.2" fill="#f4f4f4"/><rect x="1089.00" y="1043.20" width="2.2" height="2.2" fill="#f4f4f4"/><rect x="1089.00" y="1046.15" width="2.2" height="2.2" fill="#f4f4f4"/><rect x="1089.00" y="1049.10" width="2.2" height="2.2" fill="#f4f4f4"/><rect x="1089.00" y="1052.05" width="2.2" height="2.2" fill="#f4f4f4"/><rect x="1089.00" y="1055.00" width="2.2" height="2.2" fill="#f4f4f4"/>
<path d="M1094.40 1047.40 H1099.80 L1097.10 1051.60 Z" fill="#222"/>
<rect x="1107.2" y="1043.2" width="14.4" height="12.2" rx="1" fill="#b9c8ea" stroke="#2b3f66" stroke-width="1"/><path d="M1114.4 1043.2 V1055.4 M1107.2 1049.3 H1121.6" stroke="#2b3f66" stroke-width="1"/>
<path d="M1125.50 1047.40 H1130.90 L1128.20 1051.60 Z" fill="#222"/>
<rect x="66.6" y="1089.5" width="1.8" height="11" fill="#636363"/><path d="M78.2 1089.5 V1100.5 L69 1095 Z" fill="#636363"/>
<path d="M100.5 1089.5 V1100.5 L91.4 1095 Z" fill="#636363"/><rect x="102.2" y="1093" width="1.8" height="4.5" fill="#636363"/>
<path d="M116.8 1087.3 V1101.7 L128.7 1094.5 Z" fill="#636363"/>
<rect x="140.9" y="1093" width="1.8" height="4.5" fill="#636363"/><path d="M144.3 1089.5 V1100.5 L153.5 1095 Z" fill="#636363"/>
<path d="M166.8 1089.5 V1100.5 L176 1095 Z" fill="#636363"/><rect x="176.5" y="1089.5" width="1.8" height="11" fill="#636363"/>
<path d="M191.9 1080 H204.1 V1083.5 L199 1088 H197 L191.9 1083.5 Z" fill="#636363"/><rect x="197.1" y="1086" width="2" height="26" fill="#636363"/>
<rect x="1959.10" y="1092.90" width="3.2" height="3.2" transform="rotate(0 1960.70 1094.50)" fill="#777"/><rect x="1957.28" y="1097.28" width="3.2" height="3.2" transform="rotate(45 1958.88 1098.88)" fill="#777"/><rect x="1952.90" y="1099.10" width="3.2" height="3.2" transform="rotate(90 1954.50 1100.70)" fill="#777"/><rect x="1948.52" y="1097.28" width="3.2" height="3.2" transform="rotate(135 1950.12 1098.88)" fill="#777"/><rect x="1946.70" y="1092.90" width="3.2" height="3.2" transform="rotate(180 1948.30 1094.50)" fill="#777"/><rect x="1948.52" y="1088.52" width="3.2" height="3.2" transform="rotate(225 1950.12 1090.12)" fill="#777"/><rect x="1952.90" y="1086.70" width="3.2" height="3.2" transform="rotate(270 1954.50 1088.30)" fill="#777"/><rect x="1957.28" y="1088.52" width="3.2" height="3.2" transform="rotate(315 1958.88 1090.12)" fill="#777"/><circle cx="1954.5" cy="1094.5" r="5.6" fill="#777"/><circle cx="1954.5" cy="1094.5" r="2.2" fill="#f0f0f0"/>
<path d="M365 368.3 L234 182" stroke="#e8491d" stroke-width="4.2" stroke-linecap="round"/><path d="M222.1 166.5 L245.3 180.2 L227.2 192.7 Z" fill="#e8491d" stroke="#e8491d" stroke-width="1" stroke-linejoin="round"/></svg></body></html>
